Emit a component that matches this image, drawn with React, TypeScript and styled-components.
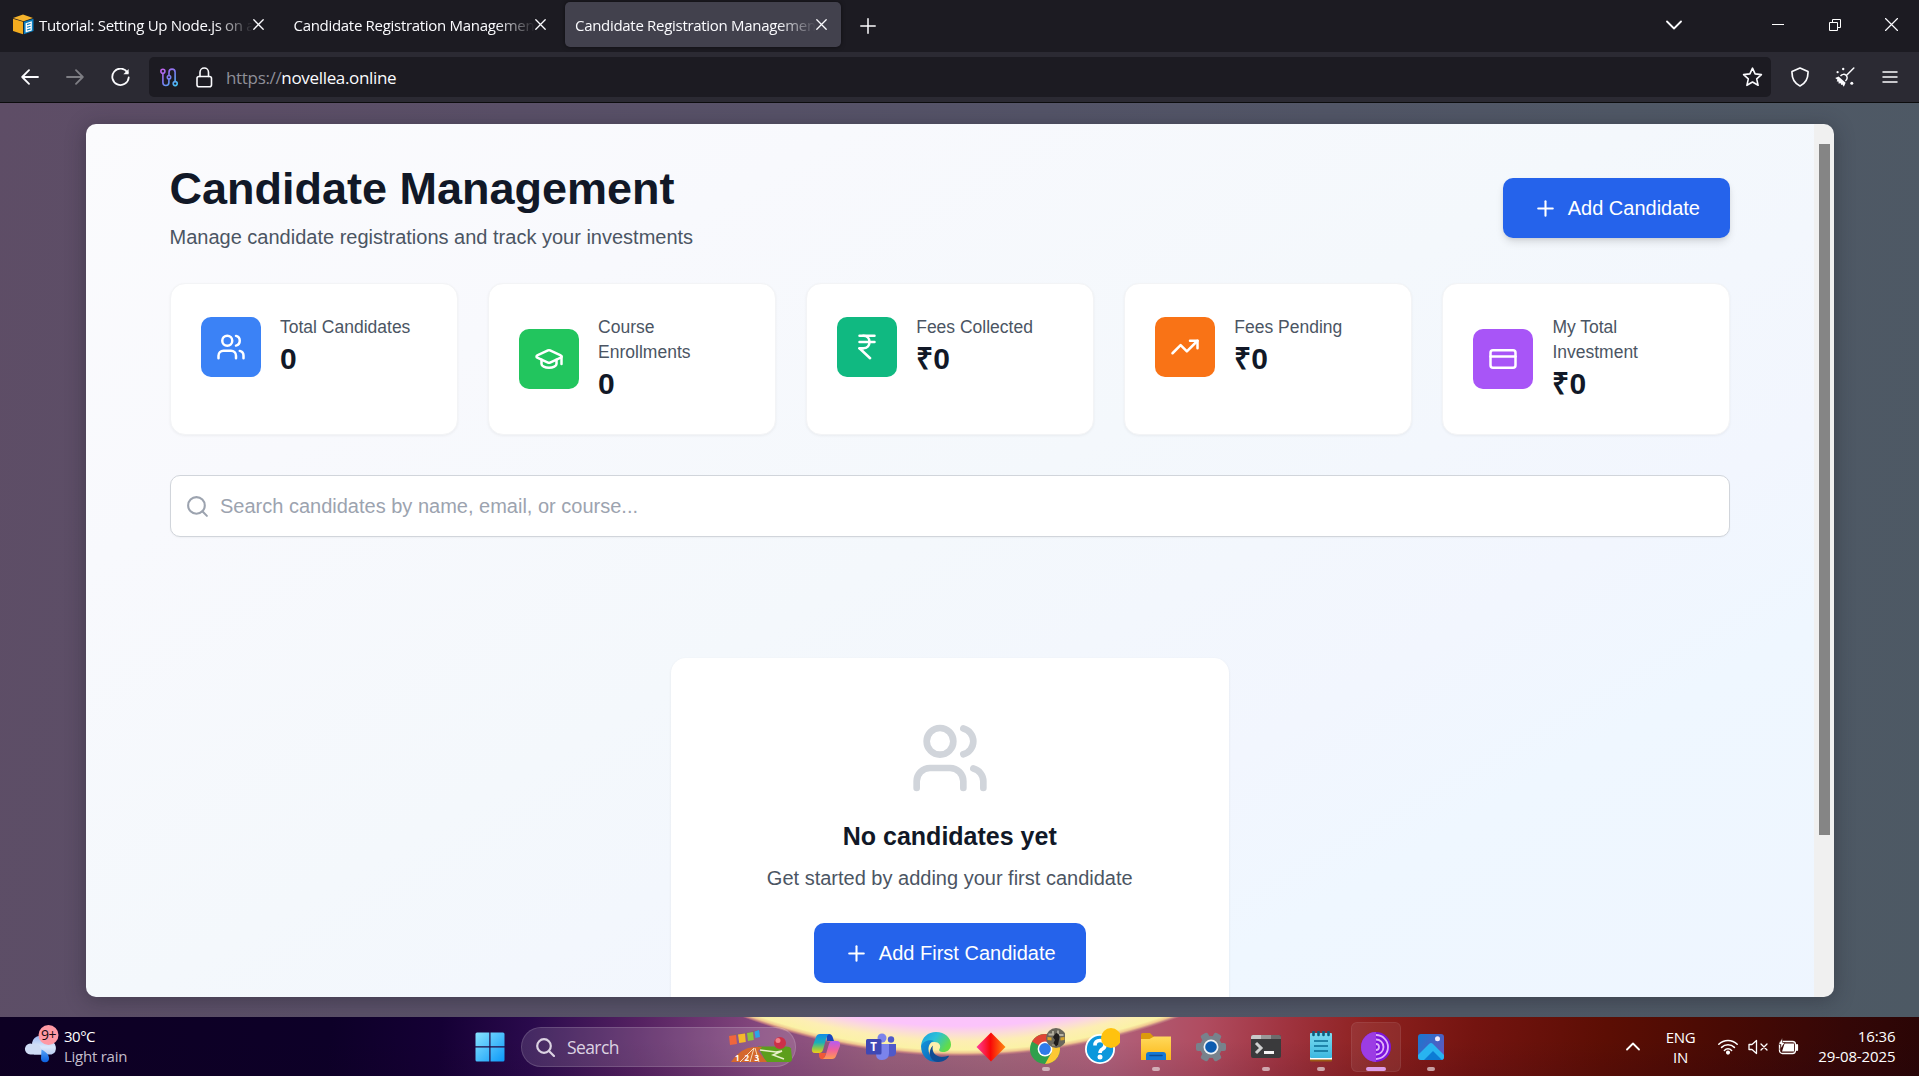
import React from 'react';
import styled, { createGlobalStyle } from 'styled-components';
import { Users, GraduationCap, IndianRupee, TrendingUp, CreditCard, Plus, Search } from 'lucide-react';

const UI = '"Open Sans", "Noto Sans", sans-serif';
const ARIAL = '"Liberation Sans", Arial, sans-serif';

const Global = createGlobalStyle`
  *, *::before, *::after { box-sizing: border-box; }
  body { margin: 0; overflow: hidden; font-family: ${ARIAL}; }
  h1, h2, p { margin: 0; }
  svg { display: block; flex: none; }
  button { border: 0; padding: 0; font: inherit; color: inherit; background: none; }
`;

const Screen = styled.div`
  width: 1919px;
  height: 1076px;
  display: flex;
  flex-direction: column;
  overflow: hidden;
`;

/* ---------- browser chrome ---------- */

const TabStrip = styled.div`
  height: 52px;
  flex: none;
  display: flex;
  align-items: flex-start;
  padding: 2px 0 0 2px;
  background: #1c1b22;
  color: #fbfbfe;
  font-family: ${UI};
`;

const Tab = styled.div<{ $active?: boolean }>`
  width: 276px;
  height: 45px;
  margin-right: 5.5px;
  padding: 0 14px 0 10px;
  display: flex;
  align-items: center;
  border-radius: 5px;
  background: ${p => (p.$active ? '#42414d' : 'transparent')};
  box-shadow: ${p => (p.$active ? '0 0 4px rgba(0,0,0,.5)' : 'none')};
`;

const TabTitle = styled.span`
  flex: 1;
  min-width: 0;
  overflow: hidden;
  white-space: nowrap;
  font-size: 15px;
  letter-spacing: -0.3px;
  line-height: 22px;
  padding-right: 2px;
  mask-image: linear-gradient(to right, #000 calc(100% - 38px), transparent 100%);
`;

const Favicon = styled.span`
  margin: 0 5px 0 1px;
`;

const NewTab = styled.button`
  height: 47px;
  width: 43px;
  display: flex;
  align-items: center;
  justify-content: center;
`;

const WindowControls = styled.div`
  margin-left: auto;
  height: 45px;
  display: flex;
  align-items: center;
`;

const ControlCell = styled.button<{ $w: number }>`
  width: ${p => p.$w}px;
  height: 45px;
  display: flex;
  align-items: center;
  justify-content: center;
`;

const Toolbar = styled.div`
  height: 51px;
  flex: none;
  display: flex;
  align-items: center;
  padding: 0 6.5px 0 7.5px;
  background: #2b2a33;
  border-bottom: 1px solid #0c0c0d;
  color: #fbfbfe;
  font-family: ${UI};
`;

const ToolButton = styled.button<{ $dim?: boolean }>`
  width: 45px;
  height: 40px;
  display: flex;
  align-items: center;
  justify-content: center;
  opacity: ${p => (p.$dim ? 0.4 : 1)};
`;

const UrlBar = styled.div`
  flex: 1;
  height: 40px;
  margin: 0 6.5px;
  padding: 0 8px 0 11px;
  display: flex;
  align-items: center;
  background: #1c1b22;
  border-radius: 5px;
`;

const UrlText = styled.span`
  flex: 1;
  margin-left: 13px;
  padding-top: 2px;
  font-size: 17px;
  letter-spacing: -0.33px;
  line-height: 24px;
  em { font-style: normal; color: #8f8f98; }
`;

const LockSlot = styled.span`
  margin-left: 18px;
`;

/* ---------- page ---------- */

const Backdrop = styled.div`
  height: 914px;
  flex: none;
  padding: 21px 85px 20px 86px;
  background: linear-gradient(100deg, #5e4d66 0%, #5a5068 25%, #545468 50%, #505866 78%, #4d5964 100%);
`;

const Viewport = styled.div`
  width: 1748px;
  height: 873px;
  display: flex;
  overflow: hidden;
  border-radius: 10px;
  box-shadow: 0 3px 20px rgba(30, 30, 40, 0.4);
`;

const Page = styled.main`
  flex: 1;
  height: 873px;
  overflow: hidden;
  padding: 40px 84px 0 83.5px;
  background: linear-gradient(to bottom right, #fbfbfd 0%, #f8f9fd 22%, #f4f8fc 45%, #f2f6fe 65%, #eff7ff 75%, #eef5ff 100%) 0 0 / 100% 1000px;
`;

const ScrollTrack = styled.div`
  width: 20px;
  padding: 20px 4px 0 5px;
  background: #f0f0f0;
`;

const ScrollThumb = styled.div`
  height: 691px;
  background: #858585;
`;

const Header = styled.header`
  display: flex;
  justify-content: space-between;
  align-items: center;
  height: 88px;
`;

const Title = styled.h1`
  font-size: 45px;
  line-height: 50px;
  font-weight: 700;
  color: #111827;
`;

const Subtitle = styled.p`
  margin-top: 8px;
  font-size: 20px;
  line-height: 30px;
  color: #4b5563;
`;

const PrimaryButton = styled.button<{ $raised?: boolean }>`
  height: 60px;
  padding: 0 30px;
  display: inline-flex;
  align-items: center;
  gap: 10px;
  border-radius: 10px;
  background: #2563eb;
  color: #fff;
  font-size: 20px;
  line-height: 30px;
  white-space: nowrap;
  box-shadow: ${p => (p.$raised ? '0 5px 8px -1px rgba(0,0,0,.12), 0 2px 5px -2px rgba(0,0,0,.12)' : 'none')};
`;

const Stats = styled.section`
  margin-top: 31px;
  display: grid;
  grid-template-columns: repeat(5, 1fr);
  gap: 30px;
`;

const StatCard = styled.article`
  height: 152px;
  padding: 30px;
  background: #fff;
  border: 1px solid #f3f4f6;
  border-radius: 15px;
  box-shadow: 0 1px 3px rgba(0, 0, 0, 0.05);
`;

const StatRow = styled.div`
  display: flex;
  align-items: center;
`;

const StatIcon = styled.div<{ $color: string }>`
  width: 60px;
  height: 60px;
  flex: none;
  display: flex;
  align-items: center;
  justify-content: center;
  border-radius: 10px;
  color: #fff;
  background: ${p => p.$color};
`;

const StatText = styled.div`
  margin-left: 19.5px;
  white-space: nowrap;
`;

const StatLabel = styled.p`
  padding-top: 1px;
  height: 25px;
  font-size: 17.5px;
  line-height: 25px;
  color: #4b5563;
`;

const StatValue = styled.p`
  font-size: 30px;
  line-height: 40px;
  font-weight: 700;
  color: #111827;
`;

const SearchBox = styled.div`
  margin-top: 40px;
  height: 62px;
  padding-left: 14px;
  display: flex;
  align-items: center;
  gap: 10.5px;
  border: 1px solid #d1d5db;
  border-radius: 10px;
  background: #fff;
  color: #9ca3af;
  font-size: 20px;
  box-shadow: 0 1px 2px rgba(0, 0, 0, 0.04);
`;

const EmptyCard = styled.section`
  width: 558px;
  height: 400px;
  margin: 121px auto 0;
  padding-top: 60px;
  display: flex;
  flex-direction: column;
  align-items: center;
  background: #fff;
  border-radius: 15px;
  box-shadow: 0 1px 3px rgba(0, 0, 0, 0.07);
`;

const EmptyTitle = styled.h2`
  margin-top: 21px;
  font-size: 25px;
  line-height: 35px;
  font-weight: 700;
  color: #111827;
`;

const EmptyText = styled.p`
  margin: 9px 0 30px;
  font-size: 20px;
  line-height: 30px;
  color: #4b5563;
`;

/* ---------- taskbar ---------- */

const Taskbar = styled.footer`
  height: 59px;
  flex: none;
  display: flex;
  color: #fff;
  font-family: ${UI};
  background:
    radial-gradient(circle at 961px -589px, #f9b8ff 0, #fbc4fb 598px, #fbdcd8 606px, #fdeeb4 613px, #fbf2a6 622px, #f0c890 625px, #c07a80 627px, transparent 628.5px),
    linear-gradient(180deg, transparent 40%, rgba(20, 0, 30, 0.1) 100%),
    linear-gradient(95deg, #0d0023 0, #0d0028 330px, #150035 440px, #2a0a4c 530px, #562262 640px, #85487e 760px, #9a607e 880px, #a4667c 1000px, #b0607a 1110px, #b04c60 1200px, #a03440 1280px, #8c201e 1370px, #741410 1470px, #5c0e04 1600px, #480a04 1720px, #340707 1840px, #2a0505 1919px);
`;

const Weather = styled.div`
  width: 462px;
  padding: 8px 0 0 24px;
  display: flex;
  align-items: flex-start;
`;

const WeatherText = styled.div`
  margin: 0.5px 0 0 4px;
  font-size: 15px;
  line-height: 20px;
  letter-spacing: -0.25px;
  span { display: block; }
  span:first-child { letter-spacing: -0.5px; }
  span + span { color: #c4bdcc; }
`;

const AppCell = styled.div`
  width: 55px;
  height: 59px;
  flex: none;
  display: flex;
  flex-direction: column;
  align-items: center;
  padding-top: 10px;
`;

const AppGlyph = styled.div<{ $focus?: boolean }>`
  position: relative;
  width: 50px;
  height: 50px;
  margin-top: -5px;
  display: flex;
  align-items: center;
  justify-content: center;
  border-radius: 6px;
  padding-bottom: 1px;
  background: ${p => (p.$focus ? 'rgba(255,255,255,.07)' : 'none')};
  box-shadow: ${p => (p.$focus ? 'inset 0 0 0 1px rgba(255,255,255,.07)' : 'none')};
`;

const RunMark = styled.i<{ $wide?: boolean }>`
  position: absolute;
  bottom: 1px;
  left: 50%;
  width: ${p => (p.$wide ? 20 : 8)}px;
  height: 4px;
  transform: translateX(-50%);
  border-radius: 2px;
  background: ${p => (p.$wide ? '#dc9ce8' : 'rgba(225,205,210,.75)')};
`;

const SearchSlot = styled.div`
  width: 281.5px;
  padding: 10px 0 0 4px;
`;

const SearchPill = styled.div`
  width: 275px;
  height: 40px;
  padding: 0 3px 0 14px;
  display: flex;
  align-items: center;
  border-radius: 20px;
  border: 1px solid rgba(255, 255, 255, 0.14);
  background: rgba(255, 255, 255, 0.13);
  font-size: 17.5px;
  letter-spacing: -0.6px;
  color: #dcd3e2;
  span { flex: 1; margin-left: 12px; }
`;

const Tray = styled.div`
  flex: 1;
  display: flex;
  align-items: center;
  justify-content: flex-end;
  padding-right: 23.5px;
  font-size: 15px;
  line-height: 20px;
  letter-spacing: -0.35px;
`;

const Lang = styled.div`
  width: 40px;
  margin: 0 17px 0 21px;
  text-align: center;
`;

const TrayIcons = styled.div`
  display: flex;
  align-items: center;
  gap: 10px;
  margin-right: 12px;
`;

const Clock = styled.div`
  width: 85px;
  padding-bottom: 2px;
  text-align: right;
  letter-spacing: -0.1px;
`;

/* ---------- drawings ---------- */

const Stroke = ({ w = 20, h = w, vb, sw = 1.6, children }: { w?: number; h?: number; vb?: string; sw?: number; children: React.ReactNode }) => (
  <svg width={w} height={h} viewBox={vb ?? `0 0 ${w} ${h}`} fill="none" stroke="currentColor" strokeWidth={sw} strokeLinecap="round" strokeLinejoin="round">
    {children}
  </svg>
);

const CloseX = () => <Stroke w={11} sw={1.3}><path d="M.8.8l9.4 9.4M10.2.8L.8 10.2" /></Stroke>;

const BoxFavicon = () => (
  <svg width="21" height="21" viewBox="0 0 21 21">
    <path d="M0 4l10-3.5L20 4l-9.5 3.3z" fill="#f5b32c" />
    <path d="M0 4.8l10 3v12.4L0 17z" fill="#f2ab1f" />
    <path d="M10.8 7.8L20.5 4.8V17l-9.7 3.2z" fill="#0c7fc0" />
    <path d="M12.6 9.2l6.2-2v9.4l-6.2 2z" fill="#fff" />
    <path d="M14 10.6l3.6-1.1M14 13.3l3.6-1.1M14 16l3.6-1.1" stroke="#0c7fc0" strokeWidth="1.1" />
  </svg>
);

const CircuitIcon = () => (
  <svg width="18" height="19" viewBox="0 0 18 19" fill="none" strokeWidth="1.6">
    <defs>
      <linearGradient id="circ" x1="0" y1="0" x2="18" y2="19" gradientUnits="userSpaceOnUse">
        <stop offset="0" stopColor="#d05be8" /><stop offset=".5" stopColor="#7a7cf0" /><stop offset="1" stopColor="#3dd0f5" />
      </linearGradient>
    </defs>
    <g stroke="url(#circ)">
      <circle cx="2.9" cy="3.2" r="2" />
      <circle cx="15.2" cy="15.6" r="2" />
      <circle cx="9" cy="9.2" r="1.7" />
      <path d="M2.9 5.3V14.5a3 3 0 0 0 6 0V11M9 7.4V4.2a3 3 0 0 1 6.1 0v9.3" />
    </g>
  </svg>
);

const BroomIcon = () => (
  <svg width="20" height="20" viewBox="0 0 20 20" fill="none">
    <path d="M18.8 1L11.6 8.2" stroke="currentColor" strokeWidth="1.5" strokeLinecap="round" />
    <path d="M5.500 9c1.600-2 4-2.200 5.600-.7 1.500 1.700 1.200 4-.7 5.800" stroke="currentColor" strokeWidth="1.400" />
    <path d="M3.600 9.400l7 6.400-.6 1.400-1.200 2.600-1.500-2.300-1 .6-.9-2.200-1.700.8-.2-2.300-1.800.1.700-1.700L.2 11z" fill="currentColor" />
    <circle cx="2.600" cy="5.200" r="1.100" fill="currentColor" /><circle cx="8.200" cy="2" r="1.200" fill="currentColor" /><circle cx="16.800" cy="16.200" r="1.500" fill="currentColor" />
  </svg>
);

const WeatherIcon = () => (
  <svg width="36" height="38" viewBox="0 0 36 38">
    <defs>
      <linearGradient id="cloud" x1="0" y1="0" x2="0" y2="1"><stop offset="0" stopColor="#9db8f2" /><stop offset=".6" stopColor="#dbe8fb" /><stop offset="1" stopColor="#b8ccf2" /></linearGradient>
      <linearGradient id="drop" x1="0" y1="0" x2="0" y2="1"><stop offset="0" stopColor="#56a3f8" /><stop offset="1" stopColor="#0a5fe0" /></linearGradient>
    </defs>
    <path d="M8 18a9 9 0 0 1 17-2 7 7 0 0 1 2.500 13.500H10z" fill="url(#cloud)" />
    <path d="M6.500 29.500a5.500 5.500 0 1 1 2-10.600c5-1 8 1.600 8.500 4.600l2 6z" fill="#cfdcf5" />
    <path d="M17.500 24.500c4 2 7.500 5 7.500 8.500a4 4 0 0 1-8 .5z" fill="url(#drop)" />
    <circle cx="24.500" cy="10" r="10" fill="#ff99a4" />
    <text x="24.600" y="15" fontFamily="Open Sans, sans-serif" fontSize="14" textAnchor="middle" fill="#1a0a10" letterSpacing="-.3">9+</text>
  </svg>
);

const WindowsIcon = () => (
  <svg width="30" height="30" viewBox="0 0 30 30">
    <defs><linearGradient id="win" x1="0" y1="0" x2="30" y2="30" gradientUnits="userSpaceOnUse"><stop offset="0" stopColor="#8be4ff" /><stop offset="1" stopColor="#0a98f8" /></linearGradient></defs>
    <path fill="url(#win)" d="M.5 2q0-1.500 1.500-1.500h12.300v13.800H.5zM15.500.5H28q1.500 0 1.500 1.500v12.300h-14zM.5 15.500h13.800v14H2q-1.500 0-1.500-1.500zM15.500 15.500h14V28q0 1.500-1.500 1.500H15.500z" />
  </svg>
);

const TrackArt = () => (
  <svg width="64" height="34" viewBox="0 0 64 34">
    <path d="M1 5Q16 5 32 0" stroke="#8a6070" fill="none" />
    <path d="M1 6l7-1 1 9-7 1z" fill="#f0663c" /><path d="M10 4.500l7-1 .8 8.500-6.600 1z" fill="#f5b82a" /><path d="M19 3l6-1 .8 8-5.800 1z" fill="#8cc63c" /><path d="M26.500 1.500l4.500-1.500 1 7-4.500 1z" fill="#2aa6e8" />
    <path d="M30 16.500h28q4 0 5 2l1 10q0 3.500-3 3.500H38z" fill="#5c9e1c" />
    <path d="M3 32Q12 18 26 17h8l-4 4 9 11z" fill="#d4682c" />
    <path d="M12 32l14-14M22 32l4-14M31 32l-4-14" stroke="#f4d8b8" fill="none" />
    <path d="M32 20l16 2 6-1-9 4 11 4" stroke="#e8f0c8" strokeWidth="1.500" fill="none" />
    <circle cx="52" cy="13" r="6" fill="#cc3048" /><circle cx="50" cy="10.500" r="2.500" fill="#f28088" />
    <g fontFamily="Open Sans, sans-serif" fontSize="8" fontWeight="700" fill="#fff"><text x="7" y="31">1</text><text x="16.500" y="31">2</text><text x="26.500" y="31">3</text></g>
  </svg>
);

const CopilotIcon = () => (
  <svg width="30" height="28" viewBox="0 0 30 28">
    <defs>
      <linearGradient id="cpa" x1="0" y1="0" x2="0" y2="1"><stop offset="0" stopColor="#128be8" /><stop offset=".45" stopColor="#1ab0b8" /><stop offset=".75" stopColor="#8cc84c" /><stop offset="1" stopColor="#f4cc18" /></linearGradient>
      <linearGradient id="cpb" x1="0" y1="0" x2="0" y2="1"><stop offset="0" stopColor="#b45cf4" /><stop offset=".5" stopColor="#f0609c" /><stop offset="1" stopColor="#ff9c50" /></linearGradient>
    </defs>
    <path d="M15 1h3q3 0 4 4l1 3h-7z" fill="#1846c0" />
    <path d="M8 20h7l-2 6q-4 1-5-3z" fill="#f05838" />
    <path d="M9 1h9q-2 1-3 5l-3 11q-1 3-4 3H4q-4 0-3-5L5 4q1-3 4-3z" fill="url(#cpa)" />
    <path d="M21 26h-9q2-1 3-5l3-10q1-3 4-3h3q5 0 4 5l-4 10q-1 3-4 3z" fill="url(#cpb)" />
  </svg>
);

const TeamsIcon = () => (
  <svg width="30" height="28" viewBox="0 0 30 28">
    <circle cx="16" cy="5" r="4.500" fill="#7b83eb" /><circle cx="25" cy="6.500" r="3.200" fill="#5059c9" />
    <path d="M22 11h8v8.500q0 4-5 4h-3z" fill="#5059c9" />
    <path d="M11 11h12v9q0 7-7 7-6 0-6-6z" fill="#7b83eb" />
    <rect x="0" y="6" width="15.500" height="15.500" rx="1.500" fill="#3f48b4" />
    <text x="7.700" y="18" textAnchor="middle" fontFamily="Open Sans, sans-serif" fontWeight="700" fontSize="11.500" fill="#fff">T</text>
  </svg>
);

const EdgeIcon = () => (
  <svg width="30" height="30" viewBox="0 0 30 30">
    <defs>
      <linearGradient id="eg1" x1="0" y1="0" x2="1" y2=".5"><stop offset="0" stopColor="#1c9ee0" /><stop offset=".5" stopColor="#2cc0d8" /><stop offset="1" stopColor="#62dc48" /></linearGradient>
      <linearGradient id="eg2" x1="0" y1="0" x2="1" y2="1"><stop offset="0" stopColor="#1494dc" /><stop offset="1" stopColor="#0a60b0" /></linearGradient>
    </defs>
    <path d="M0 14C1 5 7 0 15 0c9 0 15 6 15 12.500 0 5-4 7.500-7.500 7.500-4 0-5-1.500-4-3 2-3.500-.5-7-5-7-6 0-10 2-13.500 4z" fill="url(#eg1)" />
    <path d="M0 14c3-5.500 9-6.500 13-5-4 1-5.500 5-5.500 8.500 0 5.500 4 10.500 10 12C8 31.500 0 24.500 0 14z" fill="url(#eg2)" />
    <path d="M12 13.500c-2 6.500 3 11.500 9 11.500 3.500 0 5.500-1.500 6.500-1.300.5.200.3.900 0 1.300-3 3.800-7 5-11 5C8 29 6.500 18.500 12 13.500z" fill="#104c94" />
  </svg>
);

const DiamondIcon = () => (
  <svg width="30" height="30" viewBox="0 0 30 30">
    <defs><linearGradient id="dia"><stop offset="0" stopColor="#ff3c9c" /><stop offset=".48" stopColor="#f80808" /><stop offset="1" stopColor="#ff8a10" /></linearGradient></defs>
    <path d="M15 .5L29.500 15 15 29.500.5 15z" fill="url(#dia)" />
  </svg>
);

const ChromeIcon = () => (
  <svg width="38" height="38" viewBox="0 0 38 38">
    <circle cx="18" cy="21" r="15" fill="#30a04c" />
    <path d="M18 21L5 13.500A15 15 0 0 1 31 13.500z" fill="#e04434" />
    <path d="M18 14h13.300A15 15 0 0 1 18 36l6.500-11.500z" fill="#fcc834" />
    <circle cx="18" cy="21" r="7.400" fill="#fff" /><circle cx="18" cy="21" r="5.900" fill="#2f7bea" />
    <circle cx="29" cy="10" r="10" fill="#6a675c" />
    <path d="M21.500 6.500h4.500V3M31 2.500v4.500h5.500" stroke="#b4b0a0" strokeWidth="1.800" fill="none" />
    <path d="M25 17h6" stroke="#8c8674" strokeWidth="2" />
    <path d="M29 5a4 4 0 0 1 3.500 4l-1.500 8-2 1.500-2.500-3.500 1.500-3-2-3z" fill="#1e1c1c" /><path d="M20.500 9l4 .5v3l-4-.5zM33.500 9.500l4-.5v3l-4 .5z" fill="#d8a42c" />
  </svg>
);

const HelpIcon = () => (
  <svg width="38" height="38" viewBox="0 0 38 38">
    <circle cx="18" cy="21" r="15" fill="#fff" /><circle cx="18" cy="21" r="13.200" fill="#0c98dc" />
    <path d="M13 17.500q0-5 5-5t5 4.500q0 2.500-2.500 4t-2.500 4" fill="none" stroke="#fff" strokeWidth="3.600" /><circle cx="18" cy="29" r="2.500" fill="#fff" />
    <circle cx="29" cy="10" r="10" fill="#ffc20e" />
  </svg>
);

const FolderIcon = () => (
  <svg width="30" height="27" viewBox="0 0 30 27">
    <defs><linearGradient id="fol" x1="0" y1="0" x2="0" y2="1"><stop offset="0" stopColor="#ffd95c" /><stop offset="1" stopColor="#fcb818" /></linearGradient></defs>
    <path d="M0 1.500Q0 0 1.500 0H9l3.500 3.500V9H0z" fill="#dc9a0c" />
    <path d="M0 6h8.500L13 3.500h17V27H0z" fill="url(#fol)" />
    <path d="M5 27v-5q0-3 3-3h14q3 0 3 3v5z" fill="#1478d4" /><path d="M9 22.500h12" stroke="#0c4c94" strokeWidth="1.500" strokeLinecap="round" />
  </svg>
);

const GearIcon = () => (
  <svg width="30" height="30" viewBox="0 0 30 30">
    <g fill="#78828c">
      {[30, 90, 150].map(a => <rect key={a} x="11" y="0" width="8" height="30" rx="2" transform={`rotate(${a} 15 15)`} />)}
      <circle cx="15" cy="15" r="11" />
    </g>
    <circle cx="15" cy="15" r="7.500" fill="#f0f2f4" /><circle cx="15" cy="15" r="5.800" fill="#0d5cb0" />
  </svg>
);

const TerminalIcon = () => (
  <svg width="30" height="23" viewBox="0 0 30 23">
    <rect width="30" height="23" rx="2" fill="#3a3a3c" /><path d="M0 4V2Q0 0 2 0h8v4z" fill="#c8c8c8" /><path d="M10 0h10v4H10z" fill="#989898" /><path d="M20 0h8q2 0 2 2v2H20z" fill="#6c6c6c" />
    <path d="M5 8l5 5-5 5" stroke="#d0d0d0" strokeWidth="3" fill="none" /><path d="M13 17.500h10" stroke="#f4f4f4" strokeWidth="3" />
  </svg>
);

const NotepadIcon = () => (
  <svg width="24" height="31" viewBox="0 0 24 31">
    <defs><linearGradient id="note" x1="0" y1="0" x2="0" y2="1"><stop offset="0" stopColor="#7cdcf0" /><stop offset="1" stopColor="#3cb8e0" /></linearGradient></defs>
    <rect x="1" y="22" width="22" height="8.500" rx="1" fill="#9c5a14" /><rect x="1" y="22" width="22" height="6.500" fill="#fff" />
    <rect x="1" y="2" width="22" height="25" rx="1" fill="url(#note)" />
    <path d="M4.500 1v3M9.500 1v3M14.500 1v3M19.500 1v3" stroke="#0a6080" strokeWidth="2.600" strokeLinecap="round" />
    <path d="M5 10h14M5 15h14M5 20h14" stroke="#0a6c94" strokeWidth="1.600" />
  </svg>
);

const TorIcon = () => (
  <svg width="30" height="30" viewBox="0 0 30 30">
    <circle cx="15" cy="15" r="15" fill="#7c14dc" /><path d="M15 0a15 15 0 0 0 0 30z" fill="#9c3ce4" />
    <g fill="none" stroke="#e0b0fa" strokeWidth="1.800"><path d="M15 3a12 12 0 0 1 0 24M15 7.500a7.500 7.500 0 0 1 0 15M15 12a3 3 0 0 1 0 6" /></g>
  </svg>
);

const PhotosIcon = () => (
  <svg width="26" height="26" viewBox="0 0 26 26">
    <defs><linearGradient id="pho" x1="0" y1="0" x2="1" y2=".6"><stop offset="0" stopColor="#1878d0" /><stop offset="1" stopColor="#5c58c0" /></linearGradient></defs>
    <rect width="26" height="26" rx="3" fill="url(#pho)" />
    <path d="M0 21L11 10q2-2 4 0l11 11v2q0 3-3 3H3q-3 0-3-3z" fill="#28b4f0" /><path d="M6 26l9-9 9 9z" fill="#0c7cd4" />
    <circle cx="19.500" cy="4.800" r="2.500" fill="#f0ecfc" />
  </svg>
);

const WifiIcon = () => (
  <Stroke w={20} h={16} sw={1.5}>
    <path d="M.8 5.200a13 13 0 0 1 18.400 0M3.600 8.400a9 9 0 0 1 12.800 0M6.400 11.400a5 5 0 0 1 7.200 0" /><circle cx="10" cy="13.600" r="1.300" fill="currentColor" />
  </Stroke>
);

const MuteIcon = () => (
  <Stroke w={20} h={16} sw={1.300}><path d="M1 5.500h3L8.500 1.500v13L4 10.500H1zM13 5l6 6M19 5l-6 6" /></Stroke>
);

const BatteryIcon = () => (
  <svg width="21" height="18" viewBox="0 0 21 18" fill="none">
    <rect x="1.500" y="3.500" width="16" height="12" rx="3" stroke="#fff" strokeWidth="1.300" />
    <path d="M6.500 5.500h9.500v8H4z" fill="#fff" /><path d="M19 7v5" stroke="#fff" strokeWidth="2.200" strokeLinecap="round" />
    <path d="M4.200 0L.5 6.500h2.500L2 11.500l5-7H4.600z" fill="#fff" stroke="#3a0604" strokeWidth=".6" />
  </svg>
);

/* ---------- data ---------- */

const stats = [
  { lines: ['Total Candidates'], value: '0', color: '#3b82f6', Icon: Users },
  { lines: ['Course', 'Enrollments'], value: '0', color: '#22c55e', Icon: GraduationCap },
  { lines: ['Fees Collected'], value: '₹0', color: '#10b981', Icon: IndianRupee },
  { lines: ['Fees Pending'], value: '₹0', color: '#f97316', Icon: TrendingUp },
  { lines: ['My Total', 'Investment'], value: '₹0', color: '#a855f7', Icon: CreditCard },
];

const apps: { Icon: React.FC; running?: boolean; focus?: boolean }[] = [
  { Icon: CopilotIcon }, { Icon: TeamsIcon }, { Icon: EdgeIcon }, { Icon: DiamondIcon },
  { Icon: ChromeIcon, running: true }, { Icon: HelpIcon }, { Icon: FolderIcon, running: true },
  { Icon: GearIcon }, { Icon: TerminalIcon, running: true }, { Icon: NotepadIcon, running: true },
  { Icon: TorIcon, running: true, focus: true }, { Icon: PhotosIcon, running: true },
];

const BrowserTab = ({ title, active, icon }: { title: string; active?: boolean; icon?: React.ReactNode }) => (
  <Tab $active={active}>
    {icon && <Favicon>{icon}</Favicon>}
    <TabTitle>{title}</TabTitle>
    <CloseX />
  </Tab>
);

export default function App() {
  return (
    <Screen>
      <Global />
      <TabStrip>
        <BrowserTab title="Tutorial: Setting Up Node.js on a" icon={<BoxFavicon />} />
        <BrowserTab title="Candidate Registration Managemen" />
        <BrowserTab title="Candidate Registration Managemen" active />
        <NewTab><Stroke w={16} sw={1.500}><path d="M8 .8v14.400M.8 8h14.400" /></Stroke></NewTab>
        <WindowControls>
          <ControlCell $w={150}><Stroke w={16} h={10} sw={1.800}><path d="M1 1.500l7 7 7-7" /></Stroke></ControlCell>
          <ControlCell $w={58}><svg width="12" height="3"><path d="M0 1.500h12" stroke="#fff" /></svg></ControlCell>
          <ControlCell $w={57}>
            <svg width="13" height="14" viewBox="0 0 13 14" fill="none" stroke="#fff"><path d="M.5 4.500h8v8h-8zM3.500 4.500V1.500h8v8h-3" /></svg>
          </ControlCell>
          <ControlCell $w={55}><Stroke w={13} sw={1.200}><path d="M.5.5l12 12M12.500.5l-12 12" /></Stroke></ControlCell>
        </WindowControls>
      </TabStrip>

      <Toolbar>
        <ToolButton><Stroke w={18} h={16} sw={1.800}><path d="M17 8H1.500M8 1.200L1.200 8 8 14.800" /></Stroke></ToolButton>
        <ToolButton $dim><Stroke w={18} h={16} sw={1.800}><path d="M1 8h15.500M10 1.200L16.800 8 10 14.800" /></Stroke></ToolButton>
        <ToolButton>
          <Stroke w={19} sw={1.800}><path d="M16.500 4.500A8.200 8.200 0 1 0 17.700 9.500" /><path d="M17.600 1v5.200h-5.200z" fill="currentColor" stroke="none" /></Stroke>
        </ToolButton>
        <UrlBar>
          <CircuitIcon />
          <LockSlot><Stroke w={17} h={21} sw={1.600}><rect x="1" y="9.500" width="14.500" height="10.300" rx="2" /><path d="M4 9.500V5.300a4.200 4.200 0 0 1 8.500 0V9.500" /></Stroke></LockSlot>
          <UrlText><em>https://</em>novellea.online</UrlText>
          <Stroke w={21} h={20} sw={1.600}><path d="M10.500 1.200l2.600 5.700 6.300.7-4.700 4.200 1.400 6.500-5.600-3.300-5.600 3.300 1.400-6.500L1.600 7.600l6.300-.7z" /></Stroke>
        </UrlBar>
        <ToolButton><Stroke w={18} h={20} sw={1.700}><path d="M9 1l8 3.500c.3 7-1.500 11.500-8 14.500C2.500 16 .7 11.500 1 4.500z" /></Stroke></ToolButton>
        <ToolButton><BroomIcon /></ToolButton>
        <ToolButton><Stroke w={16} h={14} sw={1.500}><path d="M1 2h14M1 7h14M1 12h14" /></Stroke></ToolButton>
      </Toolbar>

      <Backdrop>
        <Viewport>
          <Page>
            <Header>
              <div>
                <Title>Candidate Management</Title>
                <Subtitle>Manage candidate registrations and track your investments</Subtitle>
              </div>
              <PrimaryButton $raised><Plus size={25} />Add Candidate</PrimaryButton>
            </Header>
            <Stats>
              {stats.map(({ lines, value, color, Icon }) => (
                <StatCard key={lines[0]}>
                  <StatRow>
                    <StatIcon $color={color}><Icon size={30} /></StatIcon>
                    <StatText>
                      {lines.map(l => <StatLabel key={l}>{l}</StatLabel>)}
                      <StatValue>{value}</StatValue>
                    </StatText>
                  </StatRow>
                </StatCard>
              ))}
            </Stats>
            <SearchBox><Search size={25} />Search candidates by name, email, or course...</SearchBox>
            <EmptyCard>
              <Users size={80} color="#d1d5db" />
              <EmptyTitle>No candidates yet</EmptyTitle>
              <EmptyText>Get started by adding your first candidate</EmptyText>
              <PrimaryButton><Plus size={25} />Add First Candidate</PrimaryButton>
            </EmptyCard>
          </Page>
          <ScrollTrack><ScrollThumb /></ScrollTrack>
        </Viewport>
      </Backdrop>

      <Taskbar>
        <Weather>
          <WeatherIcon />
          <WeatherText><span>30°C</span><span>Light rain</span></WeatherText>
        </Weather>
        <AppCell><AppGlyph><WindowsIcon /></AppGlyph></AppCell>
        <SearchSlot>
          <SearchPill>
            <Stroke w={19} sw={2.200}><circle cx="8" cy="8" r="6.800" /><path d="M13 13l5 5" /></Stroke>
            <span>Search</span>
            <TrackArt />
          </SearchPill>
        </SearchSlot>
        {apps.map(({ Icon, running, focus }, i) => (
          <AppCell key={i}>
            <AppGlyph $focus={focus}>
              <Icon />
              {running && <RunMark $wide={focus} />}
            </AppGlyph>
          </AppCell>
        ))}
        <Tray>
          <Stroke w={14} h={9} sw={1.800}><path d="M1 7.500l6-6 6 6" /></Stroke>
          <Lang>ENG<br />IN</Lang>
          <TrayIcons><WifiIcon /><MuteIcon /><BatteryIcon /></TrayIcons>
          <Clock>16:36<br />29-08-2025</Clock>
        </Tray>
      </Taskbar>
    </Screen>
  );
}
